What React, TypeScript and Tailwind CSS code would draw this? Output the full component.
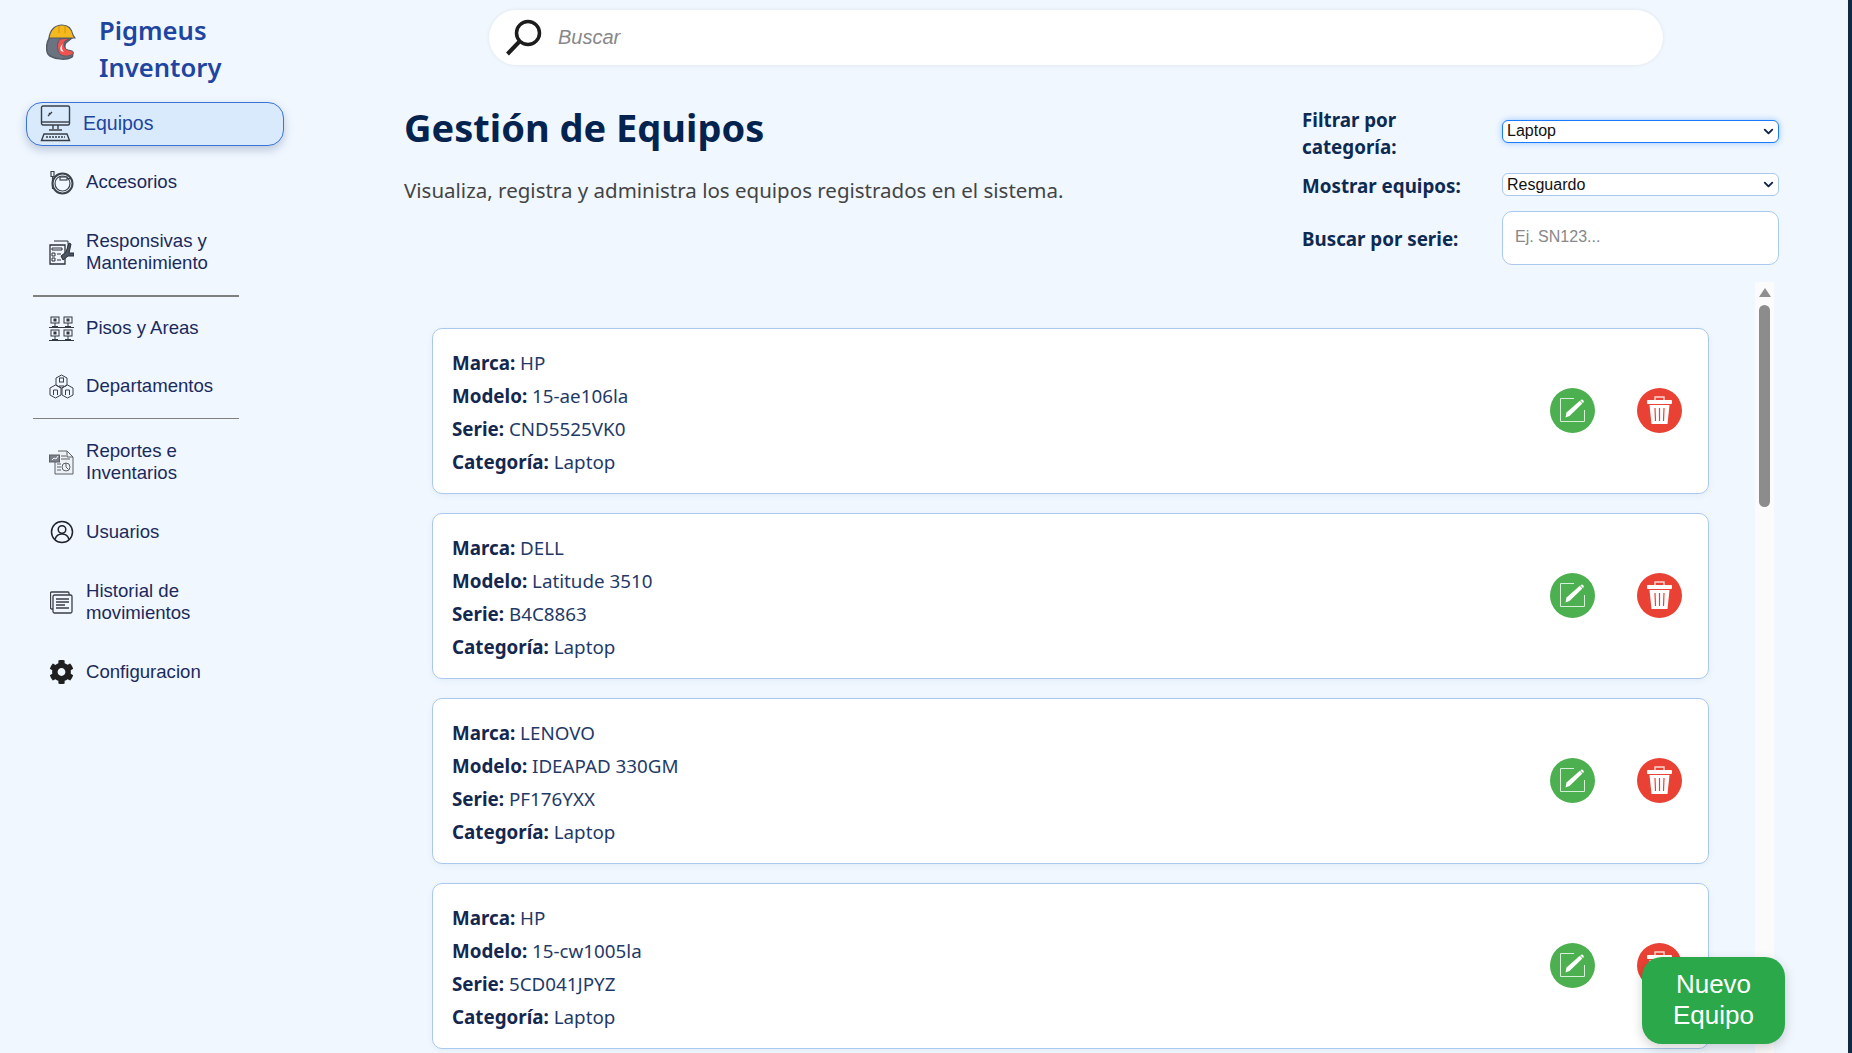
import { ChevronDown } from "lucide-react";
import { FaCog } from "react-icons/fa";

const equipos = [
  { marca: "HP", modelo: "15-ae106la", serie: "CND5525VK0" },
  { marca: "DELL", modelo: "Latitude 3510", serie: "B4C8863" },
  { marca: "LENOVO", modelo: "IDEAPAD 330GM", serie: "PF176YXX" },
  { marca: "HP", modelo: "15-cw1005la", serie: "5CD041JPYZ" },
];

function Logo() {
  return (
    <svg width="30" height="36" viewBox="0 0 30 36" className="shrink-0">
      <path d="M4 13C-1 20 0 30 4 32c7 4 17 4 22 1 1-1 1-3 0-4l-5-2c-3-2-3-7 0-9l5-4z" fill="#6b7280" stroke="#555b65" strokeWidth="1.500" />
      <path d="M14 15c-4 5-3 13 1 16 4 2 9 1 12-1 1-1 0-3-1-3l-4-1c-4-1-5-6-3-9l6-3z" fill="#ef5350" stroke="#555b65" strokeWidth="1" />
      <path d="M17 20c-2 3-1 6 1 8l-3-1c-1-2-1-5 2-7z" fill="#fff" />
      <path d="M3 14C4 6 9 1 16 1s10 5 11 10l2 3z" fill="#f6b91d" stroke="#555b65" strokeWidth="1.200" />
      <path d="M13 2v7M19 2v7" stroke="#d99a10" strokeWidth="1.200" />
    </svg>
  );
}

function MonitorIcon() {
  return (
    <svg width="31" height="37" viewBox="0 0 31 37" fill="none" stroke="#3a3f47" strokeWidth="1.400" className="shrink-0">
      <rect x="1.500" y="1" width="28" height="19" rx="1.500" />
      <path d="M1.500 17h28" />
      <path d="M8 11l4-4M9 8l1 1" />
      <path d="M13 20v4M18 20v4M9 25h13" />
      <path d="M4 29h23l2.500 6.500H1.500z" />
      <path d="M6 32h19" strokeDasharray="2 1" />
    </svg>
  );
}

function CableIcon() {
  return (
    <svg width="25" height="25" viewBox="0 0 25 25" fill="none" stroke="#3f444c" strokeWidth="1.200" className="shrink-0">
      <circle cx="13.500" cy="13.500" r="10" strokeWidth="2" />
      <circle cx="13.500" cy="13.500" r="7.500" />
      <rect x="11" y="7" width="7" height="3" fill="#f0f7ff" />
      <path d="M18 8.500h4" />
      <path d="M2 1.500h3v5H2zM3.500 7v12" />
    </svg>
  );
}

function ClipboardIcon() {
  return (
    <svg width="25" height="25" viewBox="0 0 25 25" fill="none" stroke="#2d3138" strokeWidth="1" className="shrink-0">
      <path d="M1 5h15v19H1z" strokeWidth="1.300" />
      <path d="M5 1h14v8M3 8h10v2H3zM3 13h3v3H3zM3 18h3v3H3zM8 14h4M8 20h4" />
      <path d="M20 3l-3 9-5 4 2 4 5-4h6v-3h-5l2-9z" fill="#4b5563" />
    </svg>
  );
}

function NetworkIcon() {
  const cells = [
    [2, 1],
    [15, 1],
    [2, 14],
    [15, 14],
  ];
  return (
    <svg width="25" height="25" viewBox="0 0 25 25" fill="none" stroke="#33373e" strokeWidth="1" className="shrink-0">
      {cells.map(([x, y]) => (
        <g key={`${x}-${y}`}>
          <rect x={x} y={y} width="8" height="6" />
          <rect x={x + 3} y={y + 2} width="2" height="2" fill="#33373e" />
          <path d={`M${x + 4} ${y + 6}v3M${x + 1} ${y + 9.5}h6`} />
        </g>
      ))}
      <path d="M0 11.500h25M0 24.500h25" />
    </svg>
  );
}

function HexPeopleIcon() {
  return (
    <svg width="25" height="25" viewBox="0 0 25 25" fill="none" stroke="#3a3f47" strokeWidth="1" className="shrink-0">
      <path d="M12.500 1l5.500 3v7l-5.500 3L7 11V4z" />
      <path d="M6.500 11l5.500 3v7l-5.500 3L1 21v-7z" />
      <path d="M18.500 11l5.500 3v7l-5.500 3L13 21v-7z" />
      <rect x="10.500" y="4" width="4" height="4" />
      <path d="M4.500 21v-5h4v5M16.500 21v-5h4v5M10 12h5" />
    </svg>
  );
}

function ReportIcon() {
  return (
    <svg width="25" height="25" viewBox="0 0 25 25" fill="none" stroke="#5b6068" strokeWidth="1" className="shrink-0">
      <path d="M9 1h9l6 6v17H6V10" fill="#eef2f7" />
      <path d="M18 1v6h6" />
      <rect x="0.500" y="5" width="10" height="7" fill="#7b8088" />
      <path d="M3 10l2-2 2 1 2-3" stroke="#f0f7ff" />
      <path d="M12 6h5M12 9h9M8 14h4M8 17h4M8 20h4" />
      <circle cx="17" cy="17" r="4" />
      <path d="M17 13v4l2.500 2.500" />
    </svg>
  );
}

function UserIcon() {
  return (
    <svg width="24" height="24" viewBox="0 0 24 24" fill="none" stroke="#1f2329" strokeWidth="1.500" className="shrink-0 mx-[0.5px]">
      <circle cx="12" cy="12" r="10.500" />
      <circle cx="12" cy="9.500" r="3.800" />
      <path d="M5 19.500c1-4 4-5.500 7-5.500s6 1.500 7 5.500" />
    </svg>
  );
}

function HistoryIcon() {
  return (
    <svg width="23" height="23" viewBox="0 0 23 23" fill="none" stroke="#3a3f47" strokeWidth="1.300" className="shrink-0 mx-[1px]">
      <path d="M3 18H1.500a1 1 0 01-1-1V2a1 1 0 011-1H18a1 1 0 011 1v2" />
      <rect x="3" y="4" width="19" height="18" rx="1.500" fill="#f0f7ff" />
      <path d="M6 8h13M6 11h13M6 14h9M6 17h13" />
    </svg>
  );
}

function SearchIcon() {
  return (
    <svg width="37" height="40" viewBox="0 0 37 40" fill="none" stroke="#1c1c1c" className="shrink-0">
      <circle cx="23" cy="15" r="11.500" strokeWidth="3.500" />
      <path d="M14 24L2.500 36" strokeWidth="4" />
    </svg>
  );
}

function EditIcon() {
  return (
    <svg width="28" height="26" viewBox="0 0 28 26" fill="none" className="shrink-0">
      <path d="M15 1.500H1.500v23h24V13" stroke="#d7efd8" strokeWidth="1" />
      <path d="M7.500 15.500L20.800 3.800l2.600 2.700L10.500 19 6.500 20.500z" fill="#fff" />
      <path d="M21.800 3a1.900 1.900 0 012.600 2.700l-.4.400-2.600-2.700z" fill="#fff" />
    </svg>
  );
}

function TrashIcon() {
  return (
    <svg width="27" height="30" viewBox="0 0 27 30" fill="none" className="shrink-0">
      <path d="M9 5V2h9v3" stroke="#fbd7d3" strokeWidth="1.400" />
      <rect x="1" y="5" width="25" height="4" rx="1" fill="#fff" />
      <path d="M3.500 10h20l-2 19h-16z" fill="#fff" />
      <path d="M9 13l.5 13M13.500 13v13M18 13l-.5 13" stroke="#e94234" strokeWidth="1.200" />
    </svg>
  );
}

function NavItem({ icon, tall, children }: { icon: React.ReactNode; tall?: boolean; children: React.ReactNode }) {
  return (
    <a className={`flex items-center gap-[12px] pl-[49px] text-[18.6px] leading-[22px] text-[#1b2a5c] ${tall ? "h-[82px]" : "h-[58px]"}`}>
      <span className="flex w-[25px] justify-center">{icon}</span>
      <span className="w-[150px]">{children}</span>
    </a>
  );
}

function Field({ label, value }: { label: string; value: string }) {
  return (
    <p className="h-[33px] leading-[33px]">
      <strong className="font-bold text-[#14284f]">{label}:</strong> {value}
    </p>
  );
}

function Select({ value, className }: { value: string; className: string }) {
  return (
    <div className="relative">
      <select
        defaultValue={value}
        className={`block h-[23px] w-full appearance-none rounded-[6px] border bg-white pl-[4px] font-['Liberation_Sans',sans-serif] text-[16px] font-normal leading-none text-[#111] ${className}`}
      >
        <option>{value}</option>
      </select>
      <ChevronDown size={15} strokeWidth={3} className="pointer-events-none absolute right-[3px] top-[4px] text-[#0f2344]" />
    </div>
  );
}

export default function App() {
  return (
    <div className="relative flex h-[1053px] w-full overflow-hidden bg-[#f0f7ff] font-['Liberation_Sans',sans-serif]">
      <aside className="w-[300px] shrink-0">
        <div className="flex h-[102px] gap-[23px] pl-[46px] pt-[13px]">
          <div className="pt-[11px]">
            <Logo />
          </div>
          <span className="font-['Noto_Sans',sans-serif] text-[25.6px] font-semibold leading-[36.5px] text-[#1e45a0]">
            Pigmeus
            <br />
            Inventory
          </span>
        </div>
        <a className="ml-[26px] flex h-[44px] w-[258px] items-center gap-[12px] rounded-[16px] border border-[#3b74d6] bg-[#d9eafc] pb-[1px] pl-[13px] text-[19.5px] text-[#1e45a0] shadow-[0_4px_10px_rgba(30,60,110,0.25)]">
          <MonitorIcon />
          Equipos
        </a>
        <div className="mt-[7px]">
          <NavItem icon={<CableIcon />}>Accesorios</NavItem>
          <NavItem icon={<ClipboardIcon />} tall>
            Responsivas y Mantenimiento
          </NavItem>
          <hr className="mb-[2px] mt-[2px] ml-[33px] w-[206px] border-0 border-t-2 border-[#808080]" />
          <NavItem icon={<NetworkIcon />}>Pisos y Areas</NavItem>
          <NavItem icon={<HexPeopleIcon />}>Departamentos</NavItem>
          <hr className="mb-[2px] mt-[3px] ml-[33px] w-[206px] border-0 border-t border-[#808080]" />
          <NavItem icon={<ReportIcon />} tall>
            Reportes e Inventarios
          </NavItem>
          <NavItem icon={<UserIcon />}>Usuarios</NavItem>
          <NavItem icon={<HistoryIcon />} tall>
            Historial de movimientos
          </NavItem>
          <NavItem icon={<FaCog className="text-[26px] text-[#1f1f1f]" />}>Configuracion</NavItem>
        </div>
      </aside>

      <main className="min-w-0 flex-1">
        <div className="ml-[189px] mt-[10px] flex h-[55px] w-[1174px] items-center gap-[16px] rounded-full bg-white pl-[16px] shadow-[0_0_4px_rgba(0,0,0,0.08)]">
          <SearchIcon />
          <span className="pb-[2px] text-[20px] italic text-[#888]">Buscar</span>
        </div>

        <div className="flex h-[217px] pl-[104px] pr-[69px]">
          <div className="flex-1 font-['Noto_Sans',sans-serif]">
            <h1 className="mt-[36px] text-[38px] font-bold leading-[52px] text-[#04234f]">Gestión de Equipos</h1>
            <p className="mt-[23px] text-[20.5px] leading-[28px] text-[#444]">
              Visualiza, registra y administra los equipos registrados en el sistema.
            </p>
          </div>
          <div className="grid h-fit w-[477px] grid-cols-[200px_277px] items-center gap-y-3 pt-[42px] font-['Noto_Sans',sans-serif] text-[18.8px] font-bold leading-[27px] text-[#0d2a52]">
            <label>
              Filtrar por
              <br />
              categoría:
            </label>
            <div className="mb-[6px]">
              <Select value="Laptop" className="border-[#1a7bff] shadow-[0_0_6px_rgba(26,123,255,0.4)]" />
            </div>
            <label>Mostrar equipos:</label>
            <div className="mb-[4px]">
              <Select value="Resguardo" className="border-[#a9c9ef]" />
            </div>
            <label className="mt-[2px]">Buscar por serie:</label>
            <input
              placeholder="Ej. SN123..."
              className="-mt-[1px] h-[54px] rounded-[10px] border border-[#a9c9ef] bg-white pb-[2px] pl-[12px] font-['Liberation_Sans',sans-serif] text-[16px] font-normal placeholder:text-[#888]"
            />
          </div>
        </div>

        <div className="flex h-[771px] gap-[46px] pl-[132px]">
          <div className="flex w-[1277px] shrink-0 flex-col gap-[19px] pt-[46px]">
            {equipos.map((e) => (
              <div
                key={e.serie}
                className="flex h-[166px] shrink-0 items-center justify-between rounded-[10px] border border-[#a9c9ef] bg-white pl-[19px] pr-[26px] font-['Noto_Sans',sans-serif] text-[18.8px] text-[#1f3a68] shadow-[0_2px_6px_rgba(30,60,110,0.06)]"
              >
                <div className="mt-[3px]">
                  <Field label="Marca" value={e.marca} />
                  <Field label="Modelo" value={e.modelo} />
                  <Field label="Serie" value={e.serie} />
                  <Field label="Categoría" value="Laptop" />
                </div>
                <div className="mb-[2px] flex gap-[42px]">
                  <button className="flex h-[45px] w-[45px] items-center justify-center rounded-full bg-[#4caf50]">
                    <EditIcon />
                  </button>
                  <button className="flex h-[45px] w-[45px] items-center justify-center rounded-full bg-[#e94234]">
                    <TrashIcon />
                  </button>
                </div>
              </div>
            ))}
          </div>
          <div className="flex h-full w-[19px] shrink-0 flex-col items-center bg-[#fbfbfb] pt-[6px]">
            <div className="h-0 w-0 border-x-[6px] border-b-[9px] border-x-transparent border-b-[#8f8f8f]" />
            <div className="mt-[8px] h-[202px] w-[11px] rounded-full bg-[#8c8c8c]" />
          </div>
        </div>
      </main>

      <div className="w-[4px] shrink-0 bg-[#0f2a43]" />

      <button className="absolute left-[1642px] top-[957px] h-[87px] w-[143px] rounded-[20px] bg-[#2aa84a] pb-[2px] text-[26px] leading-[31px] text-white shadow-[0_4px_12px_rgba(0,0,0,0.18)]">
        Nuevo
        <br />
        Equipo
      </button>
    </div>
  );
}
